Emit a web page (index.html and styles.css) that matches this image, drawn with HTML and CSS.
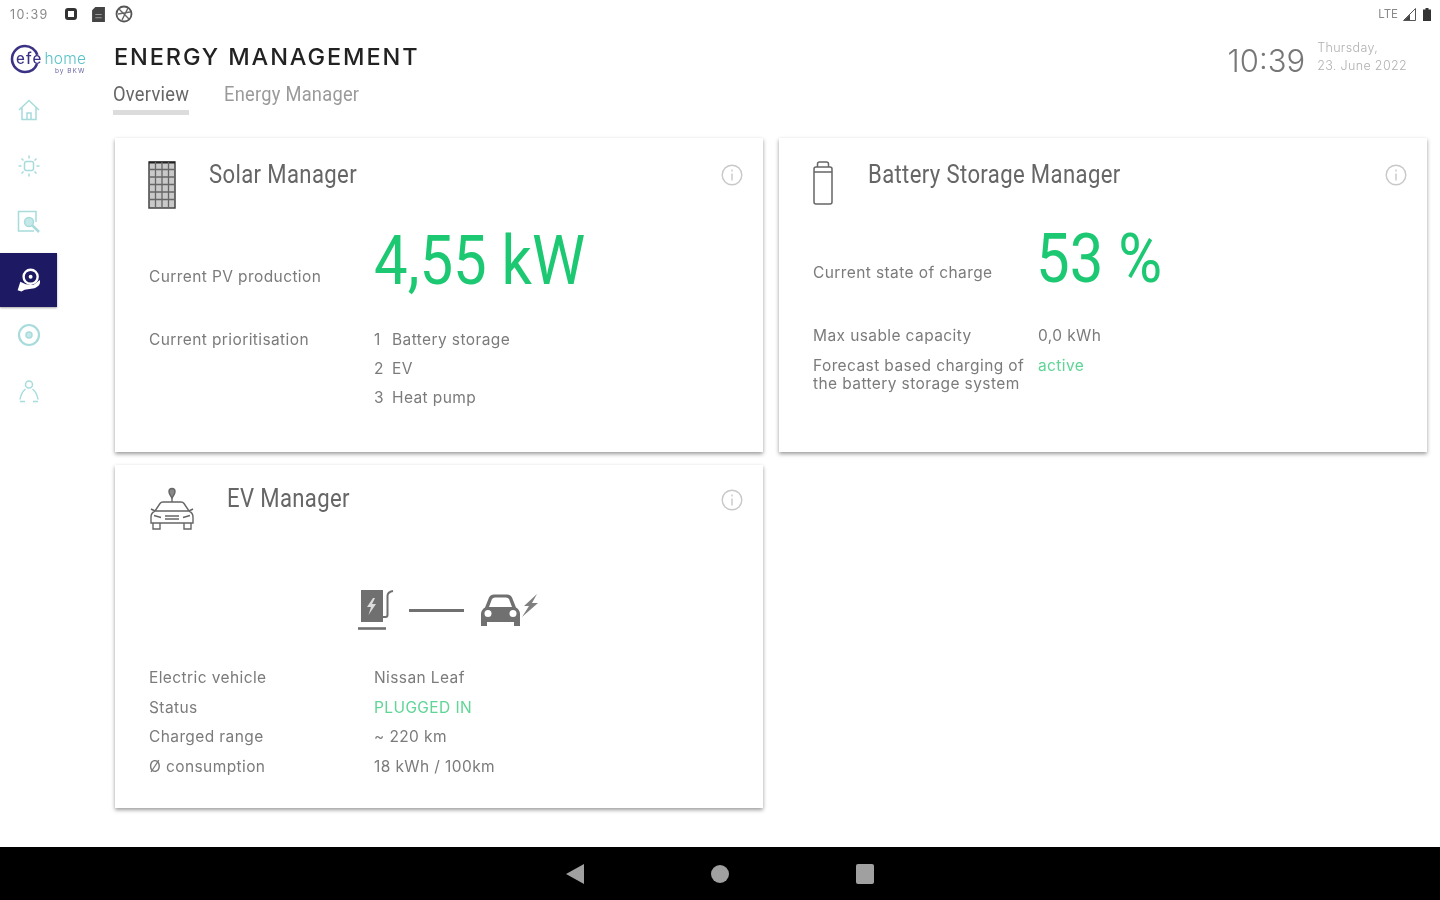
FILE: index.html
```html
<!DOCTYPE html>
<html lang="en">
<head>
<meta charset="utf-8">
<title>Energy Management</title>
<link rel="stylesheet" href="styles.css">
</head>
<body>
<div class="screen">
  <div class="statusbar">
    <div class="status-left">
      <span class="status-time">10:39</span>
      <svg class="si si-a" viewBox="0 0 12 12"><rect x="1.5" y="1.5" width="9" height="9" rx="1.5" fill="none" stroke="#333" stroke-width="3"/></svg>
      <svg class="si si-b" viewBox="0 0 12 14"><path d="M3 0h9v14H0V3z" fill="#444"/><path d="M3 7h6M3 10h6" stroke="#999" stroke-width="1"/></svg>
      <svg class="si si-c" viewBox="0 0 18 18"><circle cx="9" cy="9" r="7.5" fill="none" stroke="#555" stroke-width="1.8"/><path d="M4 4l10 10M13 3L7 15M3 9l12-2" stroke="#666" stroke-width="1.4"/></svg>
    </div>
    <div class="status-right">
      <span class="status-lte">LTE</span>
      <svg class="sig" viewBox="0 0 13 13"><path d="M12.500 0.500V12.500H0.500z" fill="none" stroke="#555"/><path d="M7 6.500V12H1.500z" fill="#444"/></svg>
      <svg class="bat" viewBox="0 0 8 13"><path d="M2.500 0h3v1.500H8V13H0V1.500h2.500z" fill="#333"/></svg>
    </div>
  </div>

  <div class="middle">
    <aside class="sidebar">
      <div class="logo">
        <svg class="logo-ring" viewBox="0 0 30 30"><circle cx="15" cy="15" r="13" fill="none" stroke="#3c3285" stroke-width="2.600" stroke-dasharray="72 10" stroke-dashoffset="-5"/></svg>
        <span class="logo-efe">efe</span><span class="logo-home">home</span>
        <span class="logo-sub">by BKW</span>
      </div>
      <nav class="nav">
        <a class="nav-item"><svg viewBox="0 0 24 24"><path d="M2 12 12 2.500 22 12M5 9.500V21.500H19V9.500M10 21.500V15H14V21.500" /></svg></a>
        <a class="nav-item"><svg viewBox="0 0 24 24"><rect x="7.500" y="7.500" width="9" height="9" rx="2"/><path d="M12 1.500V4.500M12 19.500V22.500M1.500 12H4.500M19.500 12H22.500M4.500 4.500 6.500 6.500M17.500 17.500 19.500 19.500M19.500 4.500 17.500 6.500M6.500 17.500 4.500 19.500"/></svg></a>
        <a class="nav-item"><svg viewBox="0 0 24 24"><path d="M17 21H1.500V1.500H19V12"/><circle cx="12" cy="12" r="4.500" class="nav-fill"/><path d="M15.500 15.500 22 22" stroke-width="2.500"/></svg></a>
        <a class="nav-item nav-active"><svg viewBox="0 0 24 24"><circle cx="13.500" cy="9" r="6.500" fill="none" stroke="#fff" stroke-width="2.200"/><circle cx="13.500" cy="9" r="1.800" fill="#fff"/><path d="M1.500 21.500 4 13.500 9 16 16 16.500 22 12C23 16.500 20 18.500 17 19.500L8 21 5 22.500z" fill="#fff"/></svg></a>
        <a class="nav-item"><svg viewBox="0 0 24 24"><circle cx="12" cy="12" r="10" stroke-width="2.200"/><circle cx="12" cy="12" r="3" class="nav-fill"/></svg></a>
        <a class="nav-item"><svg viewBox="0 0 24 24"><circle cx="12" cy="5.500" r="3.500"/><path d="M8.500 10C5 13 3.500 17 3 20.500M15.500 10C19 13 20.500 17 21 20.500M3 22.500H8M16 22.500H21"/></svg></a>
      </nav>
    </aside>

    <main class="content">
      <header class="pagehead">
        <div class="headings">
          <h1 class="pagetitle">ENERGY MANAGEMENT</h1>
          <div class="tabs">
            <span class="tab tab-active"><span class="narrow">Overview</span></span>
            <span class="tab tab-other"><span class="narrow">Energy Manager</span></span>
          </div>
        </div>
        <div class="clock">
          <span class="clock-time">10:39</span>
          <span class="clock-date">Thursday,<br>23. June 2022</span>
        </div>
      </header>

      <div class="cards">
        <section class="card card-solar">
          <svg class="info" viewBox="0 0 22 22"><circle cx="11" cy="11" r="9.800"/><path d="M11 9.500V16.500M11 5.500V7.500"/></svg>
          <div class="card-head">
            <svg class="head-icon solar-icon" viewBox="0 0 28 48"><rect x="1" y="1" width="26" height="46" fill="#c9c9c9" stroke="#444" stroke-width="1.500"/><path d="M1 1.500H27" stroke="#222" stroke-width="2"/><path d="M7.500 1V47M14 1V47M20.500 1V47M1 8.500H27M1 16H27M1 23.500H27M1 31H27M1 38.500H27" stroke="#666" stroke-width="1.300" fill="none"/></svg>
            <h2 class="card-title">Solar Manager</h2>
          </div>
          <div class="metric">
            <span class="label">Current PV production</span>
            <span class="bigvalue">4,55 kW</span>
          </div>
          <div class="row">
            <span class="label">Current prioritisation</span>
            <ol class="prio">
              <li><span class="num">1</span>Battery storage</li>
              <li><span class="num">2</span>EV</li>
              <li><span class="num">3</span>Heat pump</li>
            </ol>
          </div>
        </section>

        <section class="card card-battery">
          <svg class="info" viewBox="0 0 22 22"><circle cx="11" cy="11" r="9.800"/><path d="M11 9.500V16.500M11 5.500V7.500"/></svg>
          <div class="card-head">
            <svg class="head-icon battery-icon" viewBox="0 0 20 44"><path d="M4.500 6V3Q4.500 1 6.500 1H13.500Q15.500 1 15.500 3V6M1 11V8Q1 6 3 6H17Q19 6 19 8V11M1 11H19M1 11V41Q1 43 3 43H17Q19 43 19 41V11" fill="none" stroke="#666" stroke-width="1.500"/></svg>
            <h2 class="card-title">Battery Storage Manager</h2>
          </div>
          <div class="metric metric-battery">
            <span class="label">Current state of charge</span>
            <span class="bigvalue battery-value">53 %</span>
          </div>
          <div class="row">
            <span class="label">Max usable capacity</span>
            <span class="label">0,0 kWh</span>
          </div>
          <div class="row row-forecast">
            <span class="label">Forecast based charging of the battery storage system</span>
            <span class="label green">active</span>
          </div>
        </section>

        <section class="card card-ev">
          <svg class="info" viewBox="0 0 22 22"><circle cx="11" cy="11" r="9.800"/><path d="M11 9.500V16.500M11 5.500V7.500"/></svg>
          <div class="card-head">
            <svg class="head-icon ev-icon" viewBox="0 0 46 44"><g fill="none" stroke="#666" stroke-width="1.400"><path d="M23 11C20.500 7.500 20 6 20 4.500A3 3 0 0 1 26 4.500C26 6 25.500 7.500 23 11Z" fill="#888"/><path d="M23 11V15"/><path d="M6 24 11 16.500Q12 15 14 15H32Q34 15 35 16.500L40 24Q44 26 44 30V36H2V30Q2 26 6 24ZM6 24H40M4 36V42H11V36M35 36V42H42V36M16 32H30M16 29H30M5 28.500 12 30.500M41 28.500 34 30.500M2 22 6 24M44 22 40 24"/></g></svg>
            <h2 class="card-title">EV Manager</h2>
          </div>
          <div class="ev-diagram">
            <svg class="charger" viewBox="0 0 36 42"><path d="M3 1H25V33H3Z" fill="#707070"/><path d="M15 9 9 18H13L10.500 26 18 15H14L17 9Z" fill="#ddd"/><path d="M25 28H27.500Q29.500 28 29.500 26V7Q29.500 3 35 2" fill="none" stroke="#707070" stroke-width="2"/><path d="M0 39.500H28" stroke="#707070" stroke-width="2.600"/></svg>
            <span class="cable"></span>
            <svg class="car" viewBox="0 0 60 34"><path d="M1 33V21Q1 17 5 14.500L9 4.500Q10.500 1.500 14 1.500H27Q30.500 1.500 32 4.500L36 14.500Q40 17 40 21V33H34V29H7V33Z" fill="#707070"/><path d="M9 14 12 6Q13 4.500 15 4.500H26Q28 4.500 29 6L32 14Z" fill="#fff"/><circle cx="8" cy="20.500" r="3.500" fill="#fff"/><circle cx="33" cy="20.500" r="3.500" fill="#fff"/><path d="M57 1 44 13H49L42 24 58 10H52Z" fill="#808080"/></svg>
          </div>
          <div class="ev-rows">
            <div class="row"><span class="label">Electric vehicle</span><span class="label">Nissan Leaf</span></div>
            <div class="row"><span class="label">Status</span><span class="label green">PLUGGED IN</span></div>
            <div class="row"><span class="label">Charged range</span><span class="label">~ 220 km</span></div>
            <div class="row"><span class="label">Ø consumption</span><span class="label">18 kWh / 100km</span></div>
          </div>
        </section>
      </div>
    </main>
  </div>

  <div class="navbar">
    <span class="nb-back"></span>
    <span class="nb-home"></span>
    <span class="nb-recent"></span>
  </div>
</div>
</body>
</html>
```
FILE: styles.css
```css
* { box-sizing: border-box; }
html, body { margin: 0; padding: 0; }
body { background: #fff; font-family: "Inter", "Open Sans", sans-serif; color: #666; overflow: hidden; }
.screen { width: 1440px; height: 900px; display: flex; flex-direction: column; filter: blur(.55px); }

.statusbar { height: 28px; flex: none; display: flex; justify-content: space-between; align-items: center; padding: 0 9px 0 10px; }
.status-left, .status-right { display: flex; align-items: center; }
.status-time { font-size: 12.500px; color: #8a8a8a; width: 55px; letter-spacing: 1.300px; }
.si { display: block; }
.si-a { width: 12px; height: 12px; margin-right: 15px; }
.si-b { width: 13px; height: 15px; margin-right: 10px; }
.si-c { width: 18px; height: 18px; }
.status-lte { font-size: 11.500px; color: #8a8a8a; margin-right: 5px; }
.sig { width: 13px; height: 13px; margin-right: 7px; }
.bat { width: 8px; height: 13px; }

.middle { height: 819px; flex: none; display: flex; }
.sidebar { width: 114px; flex: none; }
.logo { position: relative; height: 54px; padding: 23px 0 0 16px; display: flex; align-items: baseline; line-height: 16px; }
.logo-ring { position: absolute; left: 10px; top: 16px; width: 30px; height: 30px; }
.logo-efe { color: #3c3285; font-weight: 500; font-size: 15px; letter-spacing: 1.200px; margin-right: 2px; }
.logo-home { color: #58c3c6; font-weight: 300; font-size: 15.500px; letter-spacing: .2px; }
.logo-sub { position: absolute; left: 55px; top: 39px; font-size: 6.500px; line-height: 8px; color: #6a67a5; letter-spacing: 1px; }
.nav { display: flex; flex-direction: column; width: 57px; }
.nav-item { height: 56px; display: flex; align-items: center; justify-content: center; }
.nav-item svg { width: 24px; height: 24px; fill: none; stroke: #a8dcdc; stroke-width: 1.500; }
.nav-item .nav-fill { fill: #c5e8e8; }
.nav-active { background: #1d1a63; height: 54px; margin-top: 3px; box-shadow: 0 1px 2px rgba(0,0,0,.35); }
.nav-active svg { stroke: none; width: 26px; height: 26px; }

.content { flex: 1; min-width: 0; display: flex; flex-direction: column; }
.pagehead { height: 110px; flex: none; display: flex; justify-content: space-between; }
.pagetitle { margin: 15px 0 0; font-size: 23.500px; line-height: 28px; font-weight: 500; color: #222; letter-spacing: 1.900px; }
.tabs { display: flex; gap: 35px; margin-top: 8px; margin-left: -1px; }
.tab { font-family: "Roboto", sans-serif; font-size: 21px; line-height: 30px; color: #9a9a9a; height: 36px; letter-spacing: .3px; white-space: nowrap; }
.tab-active { color: #666; border-bottom: 5px solid #dcdcdc; width: 76px; }
.tab-other { width: 134px; }
.narrow { display: inline-block; transform: scaleX(.87); transform-origin: left center; }
.clock { display: flex; gap: 12px; padding: 12px 33px 0 0; }
.clock-time { font-size: 31px; line-height: 42px; font-weight: 300; color: #777; }
.clock-date { font-size: 12.500px; line-height: 18px; color: #b0b0b0; font-weight: 300; letter-spacing: .35px; margin-top: -1px; }

.cards { display: grid; grid-template-columns: 648px 648px; grid-template-rows: 314px 343px; gap: 13px 16px; margin-left: 1px; }
.card { position: relative; background: #fff; padding: 23px 34px 0; box-shadow: 0 2px 4px rgba(0,0,0,.4); }
.info { position: absolute; right: 20px; top: 26px; width: 22px; height: 22px; fill: none; stroke: #c8c8c8; stroke-width: 1.400; }
.card-ev .info { top: 24px; }
.card-head { display: flex; align-items: flex-start; height: 48px; }
.card-title { margin: 1px 0 0; font-family: "Roboto", sans-serif; font-weight: 400; font-size: 25px; line-height: 26px; color: #666; letter-spacing: .4px; white-space: nowrap; transform: scaleX(.885); transform-origin: left center; }
.card-ev .card-title { margin-top: -2px; }
.head-icon { display: block; flex: none; }
.solar-icon { width: 28px; height: 48px; margin-left: -1px; margin-right: 33px; }
.battery-icon { width: 20px; height: 44px; margin-right: 35px; }
.ev-icon { width: 46px; height: 44px; margin-top: -1px; margin-right: 32px; }
.card-ev .card-head { height: 42px; }

.label { font-size: 15.500px; line-height: 18px; color: #7b7b7b; letter-spacing: .4px; }
.green { color: #5fd596; }
.metric { display: grid; grid-template-columns: 225px auto; align-items: start; height: 103px; margin-top: 13px; }
.metric .label { margin-top: 46px; }
.metric-battery { height: 101px; margin-top: 11px; }
.metric-battery .label { margin-top: 44px; }
.bigvalue { font-family: "Roboto", sans-serif; color: #1cc871; font-size: 69px; line-height: 78px; white-space: nowrap; transform: scaleX(.868); transform-origin: left center; }
.battery-value { margin-left: -2px; }
.row { display: grid; grid-template-columns: 225px auto; }
.row .label { line-height: 29.500px; padding-right: 4px; }
.prio { list-style: none; margin: 0; padding: 0; font-size: 15.500px; line-height: 29px; color: #7b7b7b; letter-spacing: .4px; }
.num { display: inline-block; width: 18px; }
.row-forecast .label { line-height: 18px; padding-top: 6px; }
.ev-diagram { display: flex; align-items: center; height: 42px; margin: 59px 0 0 209px; }
.charger { width: 36px; height: 42px; margin-right: 15px; }
.cable { width: 55px; height: 3px; background: #707070; margin-right: 16px; }
.car { width: 60px; height: 34px; }
.ev-rows { margin-top: 32px; }

.navbar { flex: 1; background: #000; display: flex; align-items: center; padding-left: 566px; }
.nb-back { width: 0; height: 0; border-style: solid; border-width: 10px 18px 10px 0; border-color: transparent #a0a0a0 transparent transparent; margin-right: 127px; }
.nb-home { width: 18px; height: 18px; border-radius: 50%; background: #a0a0a0; margin-right: 127px; }
.nb-recent { width: 18px; height: 20px; border-radius: 2px; background: #a0a0a0; }
```
